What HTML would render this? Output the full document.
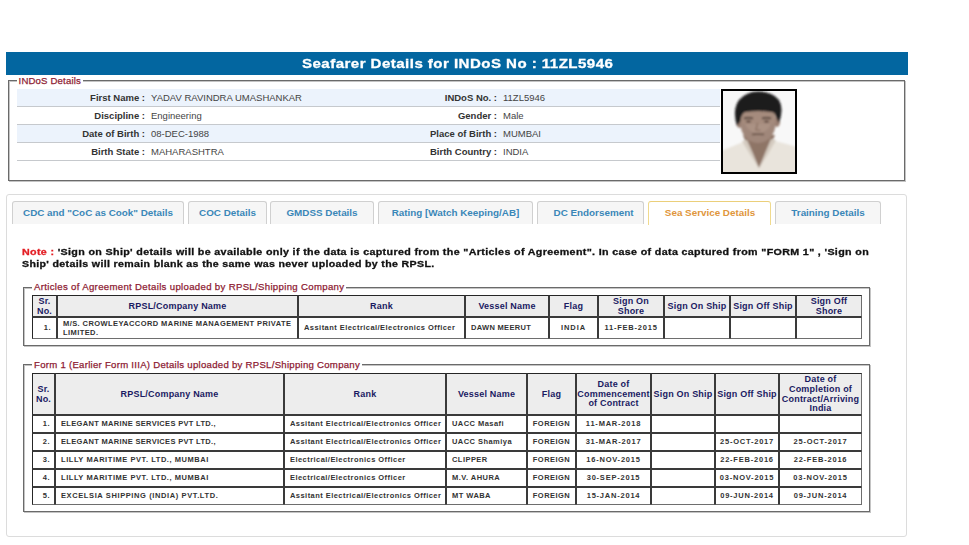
<!DOCTYPE html>
<html><head><meta charset="utf-8">
<style>
*{margin:0;padding:0;box-sizing:border-box}
html,body{width:969px;height:545px;background:#fff;overflow:hidden;font-family:"Liberation Sans",sans-serif}
.abs{position:absolute}
#hdr{left:6px;top:52px;width:902px;height:23px;background:#0366a0}
#hdr span{position:absolute;left:295.5px;top:5px;color:#fff;font-weight:bold;font-size:13px;line-height:14px;white-space:nowrap;letter-spacing:0.4px;-webkit-text-stroke:0.3px #fff;transform-origin:0 0;transform:scaleX(1.158)}
.fs{position:absolute;border:1px solid #6a6a6a;box-shadow:inset 1px 1px 0 #c4c4c4, 1px 1px 0 #c4c4c4}
.lg{position:absolute;background:#fff;color:#8e1b33;font-size:9.6px;letter-spacing:0.33px;white-space:nowrap;padding:0 2px;line-height:9px;-webkit-text-stroke:0.25px #8e1b33}
.row{position:absolute;left:17px;width:703px;height:18px;border-bottom:1px solid #c6c9cd}
.row.b{background:#ecf3fc}
.lb{position:absolute;font-weight:bold;color:#333;font-size:9.5px;white-space:nowrap;text-align:right;line-height:12px}
.vl{position:absolute;color:#444;font-size:9.5px;white-space:nowrap;line-height:12px}
#photo{left:721px;top:89px;width:76px;height:85px;border:2px solid #000;background:#f4f4f4;overflow:hidden}
#tabs{left:6px;top:194px;width:901px;height:343px;border:1px solid #dcdcdc;border-radius:3px}
.tab{position:absolute;top:201px;height:23px;background:#f6f6f6;border:1px solid #d0d0d0;border-bottom:none;border-radius:3px 3px 0 0;color:#3a87b8;font-weight:bold;font-size:9.85px;text-align:center;line-height:21px;white-space:nowrap}
.tab.p5{padding-left:6px}
.tab.act{background:#fff;border-color:#f0da8e;border-top-color:#ebcf7a;color:#e0963c;height:24px;padding-left:1px}
.note{position:absolute;left:22px;font-weight:bold;font-size:9.4px;color:#111;white-space:nowrap;line-height:12px;letter-spacing:0.3px;-webkit-text-stroke:0.3px #111;transform-origin:0 0}
table.t{position:absolute;border-collapse:separate;border-spacing:0;border:0;table-layout:fixed}
table.t td:last-child{border-right-color:#6e6e6e}
table.t tr:last-child td{border-bottom-color:#6e6e6e}
table.t tr:first-child td{border-top-color:#262626}
table.t td:first-child{border-left-color:#262626}
table.t td{border:1px solid #3a3a3a;font-weight:bold;color:#333;font-size:7.5px;white-space:nowrap;overflow:hidden;text-align:center;padding:0 0 1px 0;letter-spacing:0.45px}
table.t td.l{text-align:left;padding-left:5px}
table.t td.r{text-align:right;padding-right:5px}
table.t td.dt{letter-spacing:0.78px}
table.t tr.h td{background:#ededed;color:#1a1a62;font-size:9px;line-height:9.7px;letter-spacing:0.2px;padding:1px 0 0 0}
table.t tr.h1 td{line-height:9.5px}
</style></head><body>
<div id="hdr" class="abs"><span>Seafarer Details for INDoS No : 11ZL5946</span></div>
<div class="fs" style="left:8px;top:80px;width:897px;height:101px"></div>
<div class="lg" style="left:16.8px;top:75.5px;letter-spacing:0.16px;padding-left:1.8px">INDoS Details</div>
<div class="row b" style="top:89px"></div>
<div class="row" style="top:107px"></div>
<div class="row b" style="top:125px"></div>
<div class="row" style="top:143px"></div>
<div id="photo" class="abs"><svg width="72" height="81" viewBox="0 0 72 81" style="display:block">
<defs><filter id="bl" x="-20%" y="-20%" width="140%" height="140%"><feGaussianBlur stdDeviation="1"/></filter></defs>
<rect width="72" height="81" fill="#f8f8f8"/>
<g filter="url(#bl)">
<path d="M-2 83 L-2 60 Q8 56 20 51 L23 47 L49 47 L52 50 Q64 53 74 56 L74 83 Z" fill="#e9e4dc"/>
<path d="M20 44 Q24 56 36 77 Q46 58 52 44 Z" fill="#8e7466"/>
<path d="M19 50 Q27 64 36 77 Q30 62 24 49 Z" fill="#d4cbc0"/>
<path d="M53 49 Q45 64 36 77 Q42 62 48 48 Z" fill="#d4cbc0"/>
<ellipse cx="16.5" cy="32" rx="3" ry="5" fill="#9a7f72"/>
<ellipse cx="54" cy="31" rx="3" ry="5" fill="#9a7f72"/>
<ellipse cx="35" cy="33" rx="17.5" ry="19" fill="#a0877a"/>
<ellipse cx="35" cy="30" rx="13" ry="12" fill="#ab9284"/>
<rect x="17.5" y="15" width="35" height="18" rx="4" fill="#a58b7d"/>
<path d="M14 35 Q9 19 16 9 Q24 0 36 0.5 Q50 1 56 9 Q61 18 56 32 L53 26 Q52 21 48 21 Q36 19 22 21 Q18 23 17.5 30 Z" fill="#1c1a1b"/>
<path d="M21 27.5 Q25.5 26 30 27.5" stroke="#3e2e26" stroke-width="1.4" fill="none"/>
<path d="M39 27.5 Q43.5 26 48 27.5" stroke="#3e2e26" stroke-width="1.4" fill="none"/>
<ellipse cx="25.5" cy="30.5" rx="2.6" ry="1.1" fill="#4e3a30"/>
<ellipse cx="43.5" cy="30.5" rx="2.6" ry="1.1" fill="#4e3a30"/>
<path d="M34.5 32 L33 39 L37.5 39.5" stroke="#836858" stroke-width="1.1" fill="none"/>
<path d="M29 43.5 Q35 42.5 41 43.5" stroke="#604a3e" stroke-width="1.7" fill="none"/>
</g>
</svg></div>

<div class="lb" style="right:824px;top:92px">First Name :</div>
<div class="vl" style="left:151px;top:92px">YADAV RAVINDRA UMASHANKAR</div>
<div class="lb" style="right:472px;top:92px">INDoS No. :</div>
<div class="vl" style="left:503px;top:92px">11ZL5946</div>
<div class="lb" style="right:824px;top:110px">Discipline :</div>
<div class="vl" style="left:151px;top:110px">Engineering</div>
<div class="lb" style="right:472px;top:110px">Gender :</div>
<div class="vl" style="left:503px;top:110px">Male</div>
<div class="lb" style="right:824px;top:128px">Date of Birth :</div>
<div class="vl" style="left:151px;top:128px">08-DEC-1988</div>
<div class="lb" style="right:472px;top:128px">Place of Birth :</div>
<div class="vl" style="left:503px;top:128px">MUMBAI</div>
<div class="lb" style="right:824px;top:146px">Birth State :</div>
<div class="vl" style="left:151px;top:146px">MAHARASHTRA</div>
<div class="lb" style="right:472px;top:146px">Birth Country :</div>
<div class="vl" style="left:503px;top:146px">INDIA</div>
<div id="tabs" class="abs"></div>
<div class="tab" style="left:12px;width:172px">CDC and "CoC as Cook" Details</div>
<div class="tab" style="left:188px;width:79px">COC Details</div>
<div class="tab" style="left:270px;width:104px">GMDSS Details</div>
<div class="tab" style="left:378px;width:155px">Rating [Watch Keeping/AB]</div>
<div class="tab p5" style="left:537px;width:107px">DC Endorsement</div>
<div class="tab act" style="left:648px;width:123px">Sea Service Details</div>
<div class="tab" style="left:775px;width:106px">Training Details</div>
<div class="note" style="top:246px;transform:scaleX(1.1415)"><span style="color:#e31e24;-webkit-text-stroke-color:#e31e24">Note : </span>'Sign on Ship' details will be available only if the data is captured from the "Articles of Agreement". In case of data captured from "FORM 1" , 'Sign on</div>
<div class="note" style="top:258px;transform:scaleX(1.132)">Ship' details will remain blank as the same was never uploaded by the RPSL.</div>
<div class="fs" style="left:23px;top:287px;width:847px;height:59px"></div>
<div class="lg" style="left:32px;top:281.5px">Articles of Agreement Details uploaded by RPSL/Shipping Company</div>
<div class="fs" style="left:23px;top:364px;width:847px;height:148px"></div>
<div class="lg" style="left:32px;top:359.5px;letter-spacing:0.27px">Form 1 (Earlier Form IIIA) Details uploaded by RPSL/Shipping Company</div>
<table class="t" style="left:32px;top:295px;width:830px">
<tr class="h h1" style="height:22px"><td style="width:25px">Sr.<br>No.</td><td style="width:241px">RPSL/Company Name</td><td style="width:167px">Rank</td><td style="width:84px">Vessel Name</td><td style="width:49px">Flag</td><td style="width:66px">Sign On<br>Shore</td><td style="width:66px">Sign On Ship</td><td style="width:66px">Sign Off Ship</td><td style="width:66px">Sign Off<br>Shore</td></tr>
<tr class="d" style="height:22px"><td class="r">1.</td><td class="l" style="letter-spacing:0.42px;line-height:9px">M/S. CROWLEYACCORD MARINE MANAGEMENT PRIVATE<br>LIMITED.</td><td class="l" style="letter-spacing:0.45px;">Assitant Electrical/Electronics Officer</td><td class="l" style="letter-spacing:0.31px;">DAWN MEERUT</td><td style="letter-spacing:0.9px;">INDIA</td><td class="dt">11-FEB-2015</td><td></td><td></td><td></td></tr>
</table>
<table class="t" style="left:32px;top:373px;width:830px">
<tr class="h" style="height:42px;line-height:9.75px"><td style="width:23px">Sr.<br>No.</td><td style="width:229px">RPSL/Company Name</td><td style="width:162px">Rank</td><td style="width:81px">Vessel Name</td><td style="width:49px">Flag</td><td style="width:75px">Date of<br>Commencement<br>of Contract</td><td style="width:64px">Sign On Ship</td><td style="width:64px">Sign Off Ship</td><td style="width:83px">Date of<br>Completion of<br>Contract/Arriving<br>India</td></tr>
<tr class="d" style="height:18px"><td class="r" style="padding-right:4px">1.</td><td class="l" style="letter-spacing:0.32px;">ELEGANT MARINE SERVICES PVT LTD.,</td><td class="l">Assitant Electrical/Electronics Officer</td><td class="l">UACC Masafi</td><td>FOREIGN</td><td class="dt">11-MAR-2018</td><td class="dt"></td><td class="dt"></td><td class="dt"></td></tr>
<tr class="d" style="height:18px"><td class="r" style="padding-right:4px">2.</td><td class="l" style="letter-spacing:0.32px;">ELEGANT MARINE SERVICES PVT LTD.,</td><td class="l">Assitant Electrical/Electronics Officer</td><td class="l">UACC Shamiya</td><td>FOREIGN</td><td class="dt">31-MAR-2017</td><td class="dt"></td><td class="dt">25-OCT-2017</td><td class="dt">25-OCT-2017</td></tr>
<tr class="d" style="height:18px"><td class="r" style="padding-right:4px">3.</td><td class="l" style="letter-spacing:0.55px;">LILLY MARITIME PVT. LTD., MUMBAI</td><td class="l">Electrical/Electronics Officer</td><td class="l">CLIPPER</td><td>FOREIGN</td><td class="dt">16-NOV-2015</td><td class="dt"></td><td class="dt">22-FEB-2016</td><td class="dt">22-FEB-2016</td></tr>
<tr class="d" style="height:18px"><td class="r" style="padding-right:4px">4.</td><td class="l" style="letter-spacing:0.55px;">LILLY MARITIME PVT. LTD., MUMBAI</td><td class="l">Electrical/Electronics Officer</td><td class="l">M.V. AHURA</td><td>FOREIGN</td><td class="dt">30-SEP-2015</td><td class="dt"></td><td class="dt">03-NOV-2015</td><td class="dt">03-NOV-2015</td></tr>
<tr class="d" style="height:18px"><td class="r" style="padding-right:4px">5.</td><td class="l" style="letter-spacing:0.61px;">EXCELSIA SHIPPING (INDIA) PVT.LTD.</td><td class="l">Assitant Electrical/Electronics Officer</td><td class="l">MT WABA</td><td>FOREIGN</td><td class="dt">15-JAN-2014</td><td class="dt"></td><td class="dt">09-JUN-2014</td><td class="dt">09-JUN-2014</td></tr>
</table>
</body></html>
